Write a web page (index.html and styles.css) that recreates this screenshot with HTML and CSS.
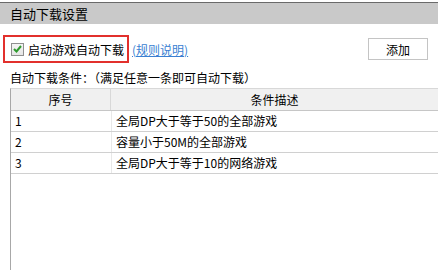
FILE: index.html
```html
<!DOCTYPE html>
<html lang="zh">
<head>
<meta charset="utf-8">
<link rel="stylesheet" href="styles.css">
</head>
<body>
<div class="topstrip"></div>
<div class="titlebar">自动下载设置</div>
<div class="options">
  <div class="highlight">
    <span class="checkbox">
      <svg width="9" height="8" viewBox="0 0 9 8"><path d="M1 4 L3.5 6.5 L8 1" fill="none" stroke="#2e9a2e" stroke-width="2"/></svg>
    </span>
    <span class="label">启动游戏自动下载</span>
  </div>
  <a class="rules">(规则说明)</a>
  <div class="spacer"></div>
  <button class="add">添加</button>
</div>
<div class="condlabel">自动下载条件：（满足任意一条即可自动下载）</div>
<div class="table">
  <div class="row head">
    <div class="c1">序号</div>
    <div class="c2">条件描述</div>
  </div>
  <div class="row">
    <div class="c1">1</div>
    <div class="c2">全局DP大于等于50的全部游戏</div>
  </div>
  <div class="row">
    <div class="c1">2</div>
    <div class="c2">容量小于50M的全部游戏</div>
  </div>
  <div class="row">
    <div class="c1">3</div>
    <div class="c2">全局DP大于等于10的网络游戏</div>
  </div>
</div>
</body>
</html>
```
FILE: styles.css
```css
html, body {
  margin: 0;
  padding: 0;
  background: #ffffff;
  font-family: "Noto Sans CJK SC", "Noto Sans", sans-serif;
  font-size: 12px;
  color: #000;
}
.topstrip {
  height: 2px;
  border-bottom: 1px solid #6a6a6a;
}
.titlebar {
  height: 21px;
  line-height: 21px;
  background: #c9c9c9;
  padding-left: 10px;
  font-size: 13px;
}
.options {
  display: flex;
  align-items: center;
  margin-top: 11px;
  padding-left: 3px;
  height: 28px;
}
.highlight {
  display: flex;
  align-items: center;
  box-sizing: border-box;
  width: 126px;
  height: 28px;
  border: 2px solid #e2302c;
  padding-left: 6px;
}
.checkbox {
  box-sizing: border-box;
  width: 13px;
  height: 13px;
  border: 1px solid #8f8f8f;
  background: linear-gradient(#f4f4f4, #e6e6e6);
  display: flex;
  align-items: center;
  justify-content: center;
}
.label {
  margin-left: 4px;
  white-space: nowrap;
}
.rules {
  margin-left: 3px;
  color: #3a7fd2;
  text-decoration: underline;
}
.spacer { flex: 1; }
.add {
  box-sizing: border-box;
  width: 60px;
  height: 22px;
  margin-right: 10px;
  border: 1px solid #c4c4c4;
  background: #fff;
  font-family: inherit;
  font-size: 12px;
  padding: 0;
  color: #000;
}
.condlabel {
  margin-top: 5px;
  padding-left: 10px;
  height: 20px;
  line-height: 20px;
}
.table {
  margin-left: 10px;
  border-left: 1px solid #a8a8a8;
  border-top: 1px solid #d8d8d8;
  height: 181px;
}
.row {
  display: flex;
  height: 20px;
  line-height: 20px;
  border-bottom: 1px solid #d0d0d0;
}
.row.head {
  background: #f0f0f0;
  height: 21px;
  line-height: 21px;
  border-bottom: 1px solid #c6c6c6;
}
.c1 {
  box-sizing: border-box;
  width: 100px;
  padding-left: 4px;
  border-right: 1px solid #d8d8d8;
}
.c2 {
  flex: 1;
  padding-left: 4px;
}
.head .c1, .head .c2 {
  text-align: center;
  padding-left: 0;
}
.row:not(.head) .c1 { border-right: none; }
.row:not(.head) .c2 { border-left: 1px solid #e8e8e8; }
```
